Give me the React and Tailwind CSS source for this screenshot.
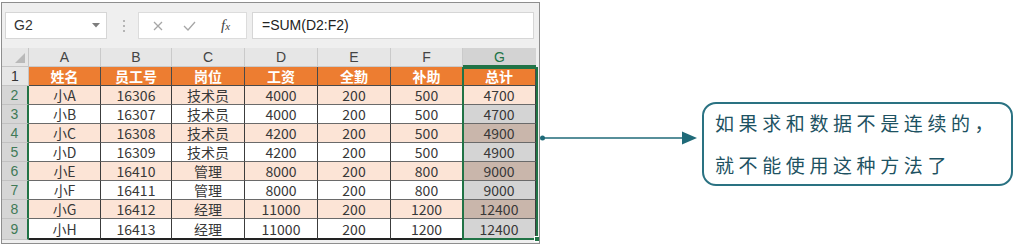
import React from "react";

const data = [
  ["小A", "16306", "技术员", "4000", "200", "500", "4700"],
  ["小B", "16307", "技术员", "4000", "200", "500", "4700"],
  ["小C", "16308", "技术员", "4200", "200", "500", "4900"],
  ["小D", "16309", "技术员", "4200", "200", "500", "4900"],
  ["小E", "16410", "管理", "8000", "200", "800", "9000"],
  ["小F", "16411", "管理", "8000", "200", "800", "9000"],
  ["小G", "16412", "经理", "11000", "200", "1200", "12400"],
  ["小H", "16413", "经理", "11000", "200", "1200", "12400"],
];
const heads = ["姓名", "员工号", "岗位", "工资", "全勤", "补助", "总计"];
const letters = ["A", "B", "C", "D", "E", "F", "G"];

function FormulaBar() {
  return (
    <div className="h-[45px] flex items-center shrink-0">
      <div className="ml-[3px] w-[102px] h-[27px] bg-white border border-[#d6d6d6] flex items-center justify-between pl-[8px] pr-[6px]">
        <span className="text-[14px] text-[#333] font-['Liberation_Sans',sans-serif]">G2</span>
        <svg width="8" height="5" viewBox="0 0 8 5">
          <path d="M0 0 L8 0 L4 4.5 Z" fill="#7d7d7d" />
        </svg>
      </div>
      <div className="ml-[16px] flex flex-col gap-[3px]">
        <div className="w-[2px] h-[2px] bg-[#b5b5b5]" />
        <div className="w-[2px] h-[2px] bg-[#b5b5b5]" />
        <div className="w-[2px] h-[2px] bg-[#b5b5b5]" />
      </div>
      <div className="ml-[13px] w-[109px] h-[27px] bg-white border border-[#dcdcdc] flex items-center pl-[14px]">
        <svg width="10" height="10" viewBox="0 0 10 10">
          <path d="M1 1 L9 9 M9 1 L1 9" stroke="#a6a6a6" strokeWidth="1.3" />
        </svg>
        <svg className="ml-[20px]" width="13" height="10" viewBox="0 0 13 10">
          <path d="M1 5 L5 9 L12 1" stroke="#a6a6a6" strokeWidth="1.3" fill="none" />
        </svg>
        <span className="ml-[25px] font-['Liberation_Serif',serif] italic text-[15px] text-[#444] leading-none">
          f<span className="text-[11px]">x</span>
        </span>
      </div>
      <div className="ml-[5px] w-[282px] h-[27px] bg-white border border-[#d6d6d6] flex items-center pl-[9px]">
        <span className="text-[14px] text-[#222] font-['Liberation_Sans',sans-serif]">=SUM(D2:F2)</span>
      </div>
    </div>
  );
}

function Grid() {
  const cell = "flex items-center justify-center h-[19px] text-[14px] leading-none";
  return (
    <div className="relative grid grid-cols-[27px_72px_71px_73px_73px_73px_72px_73px_1fr] bg-white">
      {/* header row */}
      <div className="h-[19px] bg-[#e6e6e6] border-r border-b border-[#c6c6c6] relative">
        <svg className="absolute right-[3px] bottom-[3px]" width="10" height="10" viewBox="0 0 10 10">
          <path d="M10 0 L10 10 L0 10 Z" fill="#b9b9b9" />
        </svg>
      </div>
      {letters.map((l) =>
        l === "G" ? (
          <div key={l} className={`${cell} bg-[#d3d3d3] text-[#217346] border-b-2 border-[#217346] font-['Liberation_Sans',sans-serif]`}>
            {l}
          </div>
        ) : (
          <div key={l} className={`${cell} bg-[#e6e6e6] text-[#444] border-r border-b border-[#cacaca] font-['Liberation_Sans',sans-serif]`}>
            {l}
          </div>
        )
      )}
      <div className="h-[19px] bg-[#efefef]" />

      {/* row 1 */}
      <div className={`${cell} bg-[#e6e6e6] text-[#333] border-r border-b border-[#c6c6c6] font-['Liberation_Sans',sans-serif]`}>1</div>
      {heads.map((h) => (
        <div key={h} className={`${cell} bg-[#ed7d31] text-white font-bold border-r border-b border-[#4a4a4a]`}>
          {h}
        </div>
      ))}
      <div className="h-[19px] bg-[#efefef]" />

      {data.map((row, i) => {
        const peach = i % 2 === 0;
        return (
          <React.Fragment key={i}>
            <div className={`${cell} bg-[#d6d6d6] text-[#3f7a57] border-r-2 border-r-[#217346] border-b border-b-[#c2c2c2] font-['Liberation_Sans',sans-serif] ${i === 7 ? "h-[21px]" : ""}`}>
              {i + 2}
            </div>
            {row.map((v, j) => {
              let bg = peach ? "bg-[#fce4d6]" : "bg-white";
              if (j === 6 && i > 0) bg = peach ? "bg-[#c9b6ab]" : "bg-[#d4d4d4]";
              return (
                <div
                  key={j}
                  className={`${cell} ${bg} text-[#383838] border-r border-r-[#3c3c3c] ${i === 7 ? "h-[21px] border-b-2 border-b-[#222]" : "border-b border-b-[#6a6a6a]"}`}
                >
                  {v}
                </div>
              );
            })}
            <div className={`${i === 7 ? "h-[21px]" : "h-[19px]"} bg-[#efefef]`} />
          </React.Fragment>
        );
      })}

      {/* selection overlay */}
      <div className="absolute left-[460px] top-[19px] w-[76px] h-[173px] border-2 border-[#217346] pointer-events-none">
        <div className="absolute -right-[4px] -bottom-[4px] w-[6px] h-[6px] bg-[#217346] border border-white" />
      </div>
    </div>
  );
}

export default function App() {
  return (
    <div className="w-[1018px] h-[246px] bg-white flex items-start font-['Noto_Sans_CJK_SC','Liberation_Sans',sans-serif] overflow-hidden">
      <div className="ml-[1px] mt-[2px] w-[539px] h-[242px] border border-[#8e8e8e] bg-[#efefef] flex flex-col overflow-hidden">
        <FormulaBar />
        <Grid />
      </div>
      <svg className="mt-[131px] shrink-0" width="160" height="14" viewBox="0 0 160 14">
        <circle cx="2.5" cy="7" r="2.5" fill="#1f6a78" />
        <line x1="2" y1="7" x2="145" y2="7" stroke="#1f6a78" strokeWidth="1.6" />
        <path d="M142 0.5 L157 7 L142 13.5 Z" fill="#1f6a78" />
      </svg>
      <div className="ml-[2px] mt-[102px] w-[311px] h-[84px] border-[2.5px] border-[#2a7282] rounded-[14px] pl-[11px] flex items-center">
        <div className="text-[19px] leading-[42px] tracking-[4.6px] text-[#1d5262] whitespace-nowrap">
          如果求和数据不是连续的，
          <br />
          就不能使用这种方法了
        </div>
      </div>
    </div>
  );
}
